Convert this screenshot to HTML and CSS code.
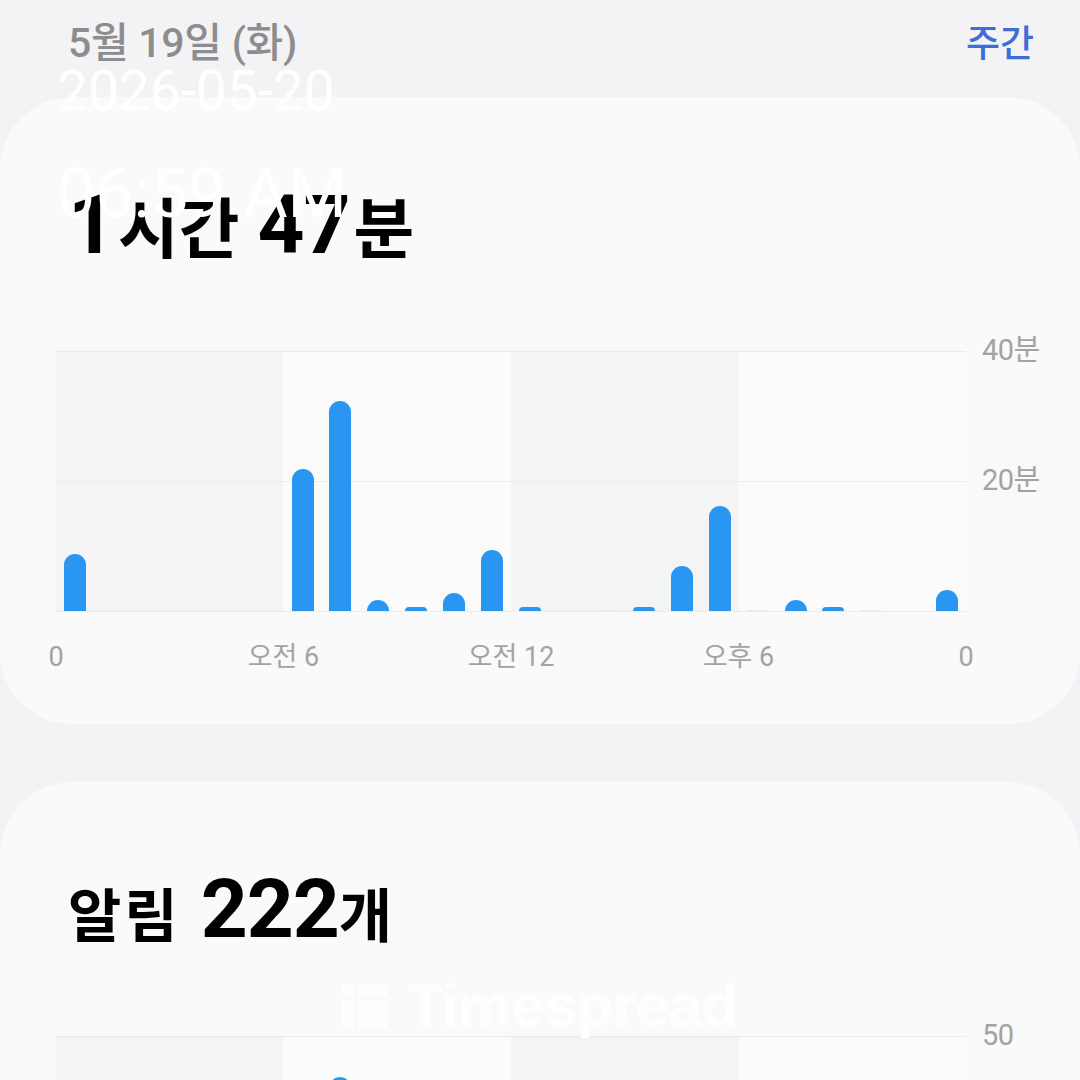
FILE: index.html
```html
<!DOCTYPE html>
<html lang="ko">
<head>
<meta charset="utf-8">
<title>디지털 웰빙</title>
<link rel="stylesheet" href="styles.css">
</head>
<body>
<div class="page">
  <header class="top">
    <div class="date">5월 19일 (화)</div>
    <div class="mode">주간</div>
  </header>

  <section class="card">
    <h1 class="title"><span class="num">1</span><span class="unit">시간</span> <span class="num">47</span><span class="unit">분</span></h1>
    <div class="chart">
      <div class="plot-wrap">
        <div class="plot">
          <div class="slot"><div class="bar" style="height:57px"></div></div>
          <div class="slot"></div>
          <div class="slot"></div>
          <div class="slot"></div>
          <div class="slot"></div>
          <div class="slot"></div>
          <div class="slot"><div class="bar" style="height:142px"></div></div>
          <div class="slot"><div class="bar" style="height:210px"></div></div>
          <div class="slot"><div class="bar" style="height:11px"></div></div>
          <div class="slot"><div class="bar" style="height:4px"></div></div>
          <div class="slot"><div class="bar" style="height:18px"></div></div>
          <div class="slot"><div class="bar" style="height:61px"></div></div>
          <div class="slot"><div class="bar" style="height:4px"></div></div>
          <div class="slot"></div>
          <div class="slot"><div class="bar faint" style="height:1px"></div></div>
          <div class="slot"><div class="bar" style="height:4px"></div></div>
          <div class="slot"><div class="bar" style="height:45px"></div></div>
          <div class="slot"><div class="bar" style="height:105px"></div></div>
          <div class="slot"><div class="bar faint" style="height:1px"></div></div>
          <div class="slot"><div class="bar" style="height:11px"></div></div>
          <div class="slot"><div class="bar" style="height:4px"></div></div>
          <div class="slot"><div class="bar faint" style="height:1px"></div></div>
          <div class="slot"></div>
          <div class="slot"><div class="bar" style="height:21px"></div></div>
        </div>
        <div class="xaxis">
          <span class="tick"><span>0</span></span>
          <span class="tick"><span>오전 6</span></span>
          <span class="tick"><span>오전 12</span></span>
          <span class="tick"><span>오후 6</span></span>
          <span class="tick"><span>0</span></span>
        </div>
      </div>
      <div class="yaxis">
        <span class="ylab ytop">40분</span>
        <span class="ylab ymid">20분</span>
      </div>
    </div>
  </section>

  <section class="card card2">
    <h1 class="title"><span class="unit small">알림</span> <span class="num">222</span><span class="unit small">개</span></h1>
    <div class="chart">
      <div class="plot-wrap">
        <div class="plot">
          <div class="slot"><div class="bar" style="height:20px"></div></div>
          <div class="slot"></div>
          <div class="slot"></div>
          <div class="slot"></div>
          <div class="slot"></div>
          <div class="slot"></div>
          <div class="slot"><div class="bar" style="height:120px"></div></div>
          <div class="slot"><div class="bar" style="height:219px"></div></div>
          <div class="slot"><div class="bar" style="height:30px"></div></div>
          <div class="slot"><div class="bar" style="height:10px"></div></div>
          <div class="slot"><div class="bar" style="height:20px"></div></div>
          <div class="slot"><div class="bar" style="height:60px"></div></div>
          <div class="slot"><div class="bar" style="height:10px"></div></div>
          <div class="slot"></div>
          <div class="slot"></div>
          <div class="slot"><div class="bar" style="height:10px"></div></div>
          <div class="slot"><div class="bar" style="height:40px"></div></div>
          <div class="slot"><div class="bar" style="height:90px"></div></div>
          <div class="slot"></div>
          <div class="slot"><div class="bar" style="height:15px"></div></div>
          <div class="slot"><div class="bar" style="height:8px"></div></div>
          <div class="slot"></div>
          <div class="slot"></div>
          <div class="slot"><div class="bar" style="height:25px"></div></div>
        </div>
      </div>
      <div class="yaxis">
        <span class="ylab ytop">50</span>
      </div>
    </div>
  </section>

  <div class="stamp">
    <div class="stamp-date">2026-05-20</div>
    <div class="stamp-time">06:59 AM</div>
  </div>

  <div class="brand">
    <span class="brand-icon">
      <i></i><i></i><i></i><i></i>
    </span>
    <span class="brand-name">Timespread</span>
  </div>
</div>
</body>
</html>
```

FILE: styles.css
```css
html, body {
  margin: 0;
  padding: 0;
}
body {
  background: #f3f3f5;
  font-family: "Roboto", "Noto Sans CJK KR", sans-serif;
  overflow: hidden;
  height: 1080px;
}
.page {
  position: relative;
  width: 1080px;
}
.top {
  height: 97px;
  display: flex;
  justify-content: space-between;
  align-items: flex-start;
  padding: 0 46px 0 68px;
  box-sizing: border-box;
}
.date {
  font-size: 41px;
  font-weight: 500;
  color: #8d8d8f;
  line-height: 46px;
  padding-top: 20px;
  letter-spacing: -0.3px;
}
.mode {
  font-family: "Noto Sans CJK KR", sans-serif;
  font-size: 37px;
  font-weight: 500;
  color: #3b6fd6;
  line-height: 44px;
  padding-top: 19px;
}
.card {
  background: #fafafa;
  border-radius: 72px;
  height: 627px;
  padding: 0 0 0 56px;
  box-sizing: border-box;
}
.card2 {
  margin-top: 58px;
  height: 700px;
}
.title {
  margin: 0;
  height: 254px;
  padding-top: 87px;
  box-sizing: border-box;
  padding-left: 12px;
  font-weight: 700;
  color: #000;
  line-height: 80px;
  font-size: 64px;
  word-spacing: 2px;
}
.num {
  font-family: "Roboto", sans-serif;
  font-size: 82px;
  font-weight: 700;
  letter-spacing: -1px;
}
.num + .unit {
  margin-left: 4px;
}
.unit {
  font-family: "Noto Sans CJK KR", sans-serif;
  font-size: 66px;
  font-weight: 700;
  letter-spacing: 0;
}
.unit.small {
  font-size: 58px;
  letter-spacing: 3px;
}
.card2 .title {
  word-spacing: 4px;
}
.card2 .num + .unit {
  margin-left: 0;
}
.chart {
  display: flex;
  align-items: flex-start;
}
.plot-wrap {
  width: 910px;
}
.plot {
  height: 261px;
  display: flex;
  align-items: flex-end;
  border-top: 1px solid #ececec;
  border-bottom: 1px solid #ececec;
  box-sizing: border-box;
  background:
    linear-gradient(to bottom, transparent 0 129px, #ececec 129px 130px, transparent 130px),
    linear-gradient(to right, #f4f4f4 0 25%, #fbfbfb 25% 50%, #f4f4f4 50% 75%, #fbfbfb 75% 100%);
}
.slot {
  flex: 1;
  height: 100%;
  display: flex;
  align-items: flex-end;
}
.bar {
  width: 22px;
  margin-left: 8px;
  background: #2a96f4;
  border-radius: 11px 11px 0 0;
}
.bar.faint {
  background: #e4ecf4;
  border-radius: 0;
}
.xaxis {
  display: flex;
  justify-content: space-between;
  margin-top: 29px;
  height: 32px;
}
.tick {
  width: 0;
  display: flex;
  justify-content: center;
}
.tick span {
  white-space: nowrap;
  font-size: 27px;
  line-height: 32px;
  color: #a3a3a3;
}
.yaxis {
  position: relative;
  margin-left: 16px;
  width: 80px;
  height: 261px;
}
.ylab {
  position: absolute;
  left: 0;
  font-size: 29px;
  line-height: 32px;
  color: #a3a3a3;
  white-space: nowrap;
  letter-spacing: -0.5px;
}
.ytop {
  top: -17px;
}
.ymid {
  top: 113px;
}
.stamp {
  position: absolute;
  left: 57px;
  top: 64px;
  color: #ffffff;
  font-family: "Roboto", sans-serif;
  font-weight: 400;
}
.stamp-date {
  font-size: 55px;
  line-height: 55px;
}
.stamp-time {
  margin-top: 41px;
  font-size: 68px;
  line-height: 68px;
}
.brand {
  position: absolute;
  left: 342px;
  top: 976px;
  display: flex;
  align-items: center;
  gap: 20px;
  opacity: 0.95;
}
.brand-icon {
  display: grid;
  grid-template-columns: 12px 28px;
  grid-template-rows: 12px 28px;
  gap: 4px 5px;
}
.brand-icon i {
  display: block;
  background: #ffffff;
}
.brand-name {
  font-family: "Liberation Sans", sans-serif;
  font-weight: 700;
  font-size: 60px;
  line-height: 60px;
  color: #ffffff;
  letter-spacing: -0.5px;
}
```
